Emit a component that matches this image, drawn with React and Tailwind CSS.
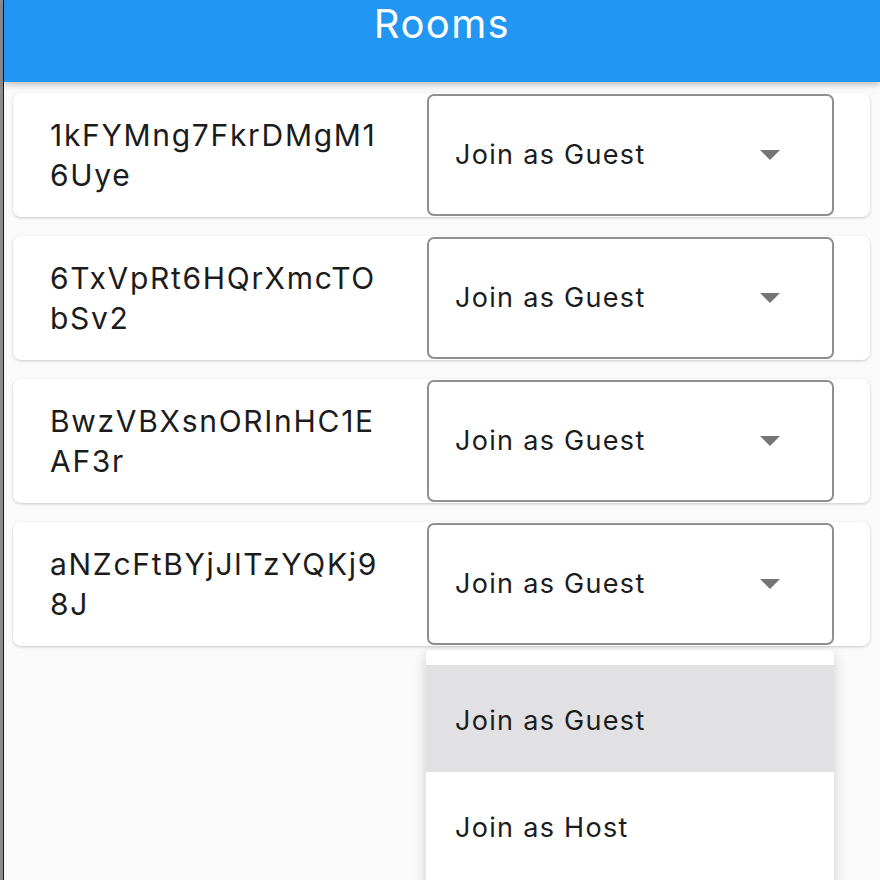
import { useState } from "react";

const rooms = [
  ["1kFYMng7FkrDMgM1", "6Uye"],
  ["6TxVpRt6HQrXmcTO", "bSv2"],
  ["BwzVBXsnORInHC1E", "AF3r"],
  ["aNZcFtBYjJlTzYQKj9", "8J"],
];

function Caret() {
  return (
    <svg width="20" height="10" viewBox="0 0 20 10" className="shrink-0">
      <path d="M0 0 L20 0 L10 10 Z" fill="#757575" />
    </svg>
  );
}

export default function App() {
  const [open] = useState(true);

  return (
    <div
      className="relative flex h-[880px] w-[880px] overflow-hidden bg-[#fafafa]"
      style={{ fontFamily: "Inter, 'Noto Sans', sans-serif" }}
    >
      {/* left edge of the window */}
      <div className="flex h-full w-[4px] shrink-0">
        <div className="h-full w-[3px] bg-[#8c8c8c]" />
        <div className="h-full w-[1px] bg-[#1a1a1a]" />
      </div>

      <div className="flex min-w-0 flex-1 flex-col">
        {/* App bar */}
        <header className="relative z-10 h-[82px] shrink-0 bg-[#2196f3] shadow-[0_3px_6px_rgba(0,0,0,0.22)]">
          <h1 className="text-center text-[40px] leading-[48px] font-normal tracking-[1.4px] text-white">
            Rooms
          </h1>
        </header>

        {/* Room list */}
        <div className="flex flex-col gap-[19px] pt-[11px] pl-[9px] pr-[10px]">
          {rooms.map(([a, b], i) => (
            <div
              key={i}
              className="flex h-[124px] items-center rounded-[8px] bg-white pr-[36px] shadow-[0_1px_3px_rgba(0,0,0,0.2)]"
            >
              <div className="flex-1 pl-[37px] text-[30px] leading-[40px] tracking-[1.7px] text-[#1c1c1c]">
                <div>{a}</div>
                <div>{b}</div>
              </div>
              <div className="flex h-[122px] w-[407px] items-center justify-between rounded-[7px] border-2 border-[#8f8f8f] pl-[26px] pr-[52px]">
                <span className="text-[27px] tracking-[1.3px] text-[#1c1c1c]">
                  Join as Guest
                </span>
                <Caret />
              </div>
            </div>
          ))}
        </div>
      </div>

      {/* open dropdown menu */}
      {open && (
        <div className="absolute top-[650px] left-[426px] z-20 flex h-[260px] w-[408px] flex-col rounded-t-[4px] bg-white pt-[15px] shadow-[0_4px_14px_rgba(0,0,0,0.18)]">
          <div className="flex h-[107px] items-center bg-[#e1e0e2] pt-[5px] pl-[29px] text-[27px] tracking-[1.3px] text-[#1c1c1c]">
            Join as Guest
          </div>
          <div className="flex h-[107px] items-center pt-[5px] pl-[29px] text-[27px] tracking-[1.3px] text-[#1c1c1c]">
            Join as Host
          </div>
        </div>
      )}
    </div>
  );
}
